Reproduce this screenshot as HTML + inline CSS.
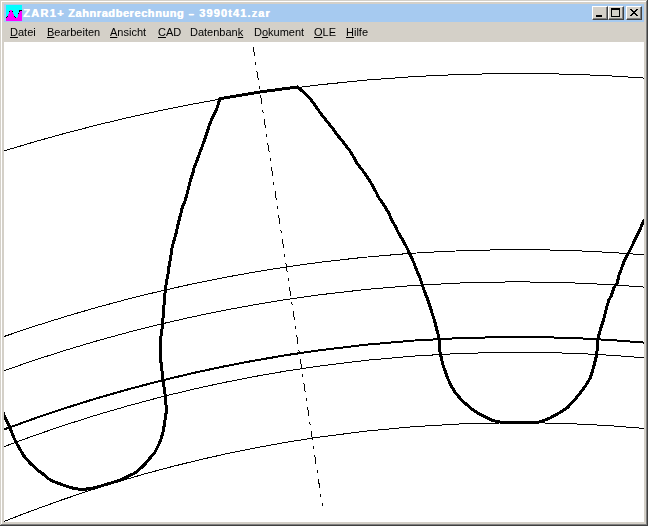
<!DOCTYPE html>
<html><head><meta charset="utf-8">
<style>
*{margin:0;padding:0;box-sizing:border-box}
html,body{width:648px;height:526px;overflow:hidden;background:#d4d0c8;font-family:"Liberation Sans",sans-serif}
.a{position:absolute}
#title{left:4px;top:4px;width:640px;height:18px;background:#a6caf0}
.tt{top:7px;text-shadow:0.5px 0 0 #fff;font-weight:bold;font-size:11px;line-height:13px;color:#fff;white-space:nowrap}
.btn{top:6px;width:16px;height:14px;background:#d4d0c8;border-top:1px solid #fff;border-left:1px solid #fff;border-right:1px solid #404040;border-bottom:1px solid #404040}
.btn i{position:absolute;left:0;top:0;right:0;bottom:0;border-right:1px solid #808080;border-bottom:1px solid #808080}
.m{top:26px;will-change:transform;font-size:11px;line-height:13px;color:#000;white-space:nowrap}
.u{text-decoration:underline}
#client{left:4px;top:42px;width:640px;height:480px;background:#fff;overflow:hidden}
#client path{fill:none;stroke:#000}
</style></head><body>
<div class="a" style="left:0;top:0;width:648px;height:526px;background:#404040"></div>
<div class="a" style="left:0;top:0;width:647px;height:525px;background:#d4d0c8"></div>
<div class="a" style="left:1px;top:1px;width:646px;height:524px;background:#808080"></div>
<div class="a" style="left:1px;top:1px;width:645px;height:523px;background:#fff"></div>
<div class="a" style="left:2px;top:2px;width:644px;height:522px;background:#d4d0c8"></div>
<div class="a" id="title"></div>
<svg class="a" style="left:6px;top:5px" width="16" height="16" shape-rendering="crispEdges"><rect width="16" height="16" fill="#00ffff"/><path d="M4 5h2v1h-2zM4 6h2v1h-2zM14 6h2v1h-2zM3 7h4v1h-4zM13 7h3v1h-3zM3 8h4v1h-4zM13 8h3v1h-3zM2 9h6v1h-6zM12 9h4v1h-4zM2 10h6v1h-6zM12 10h4v1h-4zM2 11h6v1h-6zM12 11h4v1h-4zM1 12h8v1h-8zM11 12h5v1h-5zM0 13h16v1h-16zM0 14h16v1h-16zM0 15h16v1h-16z" fill="#ff00ff" style="stroke:none"/><path d="M13 5h3v1h-3zM3 6h1v1h-1zM6 6h1v1h-1zM13 6h1v1h-1zM12 8h1v1h-1zM1 11h1v1h-1zM8 11h1v1h-1zM0 12h1v1h-1zM9 12h1v1h-1z" fill="#000000" style="stroke:none"/></svg>
<div class="a tt" style="left:23px;letter-spacing:1.3px">ZAR1+</div>
<div class="a tt" style="left:68px;letter-spacing:0.57px">Zahnradberechnung</div>
<div class="a tt" style="left:188px;transform:scaleX(1.6);transform-origin:0 0">-</div>
<div class="a tt" style="left:199px;letter-spacing:1.12px">3990t41.zar</div>
<div class="a btn" style="left:592px"><i></i></div>
<div class="a btn" style="left:608px"><i></i></div>
<div class="a btn" style="left:626px"><i></i></div>
<svg class="a" style="left:0;top:0" width="648" height="30" shape-rendering="crispEdges">
<rect x="596" y="15" width="6" height="2" fill="#000"/>
<rect x="611" y="8" width="9" height="2" fill="#000"/>
<rect x="611" y="10" width="1" height="7" fill="#000"/>
<rect x="619" y="10" width="1" height="7" fill="#000"/>
<rect x="611" y="16" width="9" height="1" fill="#000"/>
<path d="M630 9h2v1h-2zM636 9h2v1h-2zM631 10h2v1h-2zM635 10h2v1h-2zM632 11h4v1h-4zM633 12h2v1h-2zM632 13h4v1h-4zM631 14h2v1h-2zM635 14h2v1h-2zM630 15h2v1h-2zM636 15h2v1h-2z" fill="#000" style="stroke:none"/>
</svg>
<div class="a m" style="left:10px"><span class="u">D</span>atei</div>
<div class="a m" style="left:47px"><span class="u">B</span>earbeiten</div>
<div class="a m" style="left:110px"><span class="u">A</span>nsicht</div>
<div class="a m" style="left:158px"><span class="u">C</span>AD</div>
<div class="a m" style="left:190px">Datenban<span class="u">k</span></div>
<div class="a m" style="left:254px">D<span class="u">o</span>kument</div>
<div class="a m" style="left:314px"><span class="u">O</span>LE</div>
<div class="a m" style="left:346px"><span class="u">H</span>ilfe</div>
<div class="a" id="client">
<svg width="640" height="480" viewBox="4 42 640 480" shape-rendering="crispEdges">
<path d="M0.00,152.156 A1745.000,1745.000 0 0 1 648.00,78.349" stroke-width="1"/>
<path d="M0.00,337.913 A1565.000,1565.000 0 0 1 648.00,255.109" stroke-width="1"/>
<path d="M0.00,372.130 A1532.000,1532.000 0 0 1 648.00,287.426" stroke-width="1"/>
<path d="M0.00,430.956 A1465.000,1465.000 0 0 1 648.00,342.941" stroke-width="2"/>
<path d="M0.00,448.174 A1450.000,1450.000 0 0 1 648.00,358.094" stroke-width="1"/>
<path d="M0.00,523.096 A1389.750,1389.750 0 0 1 648.00,428.797" stroke-width="1"/>
<path d="M1.90,410.00 3.90,414.80 5.80,419.40 9.90,427.00 12.50,434.60 16.00,442.20 19.10,447.60 23.30,455.20 29.80,462.80 37.80,470.40 42.30,473.30 47.30,478.00 51.40,480.50 59.00,483.50 66.60,486.20 74.20,488.50 80.00,489.30 83.80,489.30 91.40,488.50 99.00,486.60 106.60,484.30 114.20,482.00 120.00,480.20 126.40,476.90 134.00,473.50 137.80,470.80 141.60,467.40 145.40,463.60 149.20,459.00 154.75,452.50 157.10,448.00 160.60,440.40 162.90,432.80 164.24,425.20 165.42,417.60 166.33,411.50 166.30,408.00 165.58,400.40 164.86,392.80 163.68,385.20 162.79,377.60 161.65,368.00 160.50,358.00 160.03,351.00 160.40,343.00 161.00,336.00 162.10,328.00 162.70,320.40 163.60,312.80 164.00,305.20 164.70,297.60 165.10,291.50 165.50,288.00 166.70,280.40 168.20,272.80 169.18,265.20 170.59,257.60 171.54,251.50 171.95,248.00 174.06,240.40 176.17,232.80 177.84,225.20 179.72,217.60 181.53,211.50 182.10,208.00 185.20,200.40 187.40,192.80 189.18,185.20 191.29,177.60 193.44,171.50 194.00,168.00 197.08,160.40 199.76,152.80 202.66,145.20 205.38,137.60 207.38,131.50 209.27,125.40 212.39,117.80 216.31,110.20 218.73,102.60 219.59,98.80 259.00,92.10 297.50,87.00 302.80,91.60 310.53,99.20 316.13,106.80 321.34,114.40 327.50,122.00 332.09,127.60 337.50,135.20 343.76,142.80 349.61,150.40 353.86,157.50 356.49,162.60 362.47,170.20 367.76,177.80 372.51,185.40 376.46,193.00 378.70,197.60 384.00,205.20 388.60,212.80 392.00,220.40 396.20,228.00 398.20,232.60 402.93,240.20 406.92,247.80 410.50,255.40 414.00,263.00 416.40,269.60 419.76,277.20 422.30,284.80 424.85,292.40 427.90,300.00 430.35,307.60 432.80,315.20 435.10,322.80 437.00,330.40 438.60,336.50 439.45,342.60 439.60,350.20 440.93,356.30 443.08,365.40 445.83,373.00 447.43,377.60 450.83,385.20 455.33,392.80 461.89,400.40 470.70,408.10 477.32,412.90 485.07,416.70 492.80,420.50 500.40,422.10 536.00,422.60 542.00,421.30 550.40,417.80 558.00,413.60 567.00,408.00 574.20,400.40 580.20,392.80 585.90,385.20 590.40,377.60 592.00,372.50 594.10,365.40 596.30,356.30 597.10,350.20 597.50,342.60 598.30,337.00 600.10,330.40 602.60,322.80 604.80,315.20 606.50,307.60 608.90,300.00 611.10,296.00 614.00,287.50 617.20,282.80 619.00,275.20 621.90,267.60 624.50,260.00 628.90,252.40 632.60,244.80 636.10,237.20 639.90,229.60 642.60,223.50 646.50,216.00 651.00,208.00" stroke-width="3" stroke-linejoin="round"/>
<path d="M253.30,47.00 L322.40,506.00" stroke-width="1" stroke-dasharray="9.101 6.068 3.034 6.068"/>
</svg>
</div>
</body></html>
